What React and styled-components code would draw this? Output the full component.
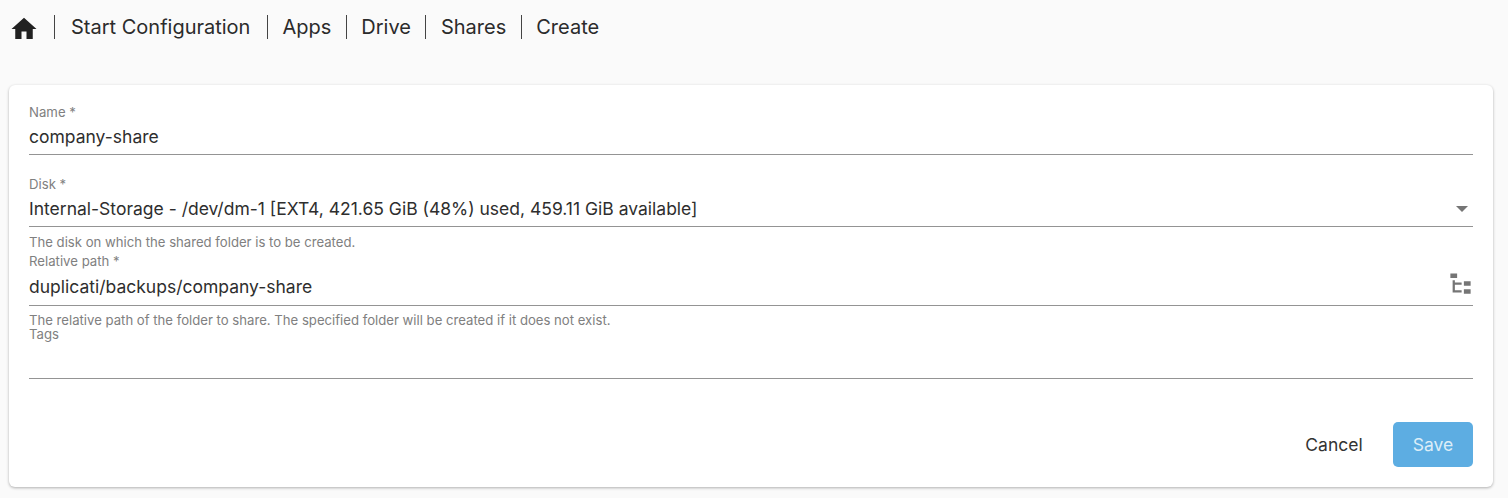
import styled, { createGlobalStyle } from 'styled-components'

const GlobalStyle = createGlobalStyle`
  html, body {
    margin: 0;
    padding: 0;
    background: #fafafa;
    font-family: Inter, "Liberation Sans", sans-serif;
  }
`

const crumbs = ['Start Configuration', 'Apps', 'Drive', 'Shares', 'Create']

function HomeIcon() {
  return (
    <svg width="30" height="30" viewBox="0 0 24 24" fill="#212121">
      <path d="M10 20v-6h4v6h5v-8h3L12 3 2 12h3v8z" />
    </svg>
  )
}

function TreeIcon() {
  return (
    <TreeSvg width="27" height="27" viewBox="0 0 24 24" fill="#757575">
      <path d="M3 3h6v4H3V3m12 7h6v4h-6v-4m0 7h6v4h-6v-4m-2-4H7v5h6v2H5V9h2v2h6v2z" />
    </TreeSvg>
  )
}

function Field({ label, value, hint, icon, rowHeight, offset, hintGap }) {
  return (
    <FieldWrap $offset={offset}>
      <Label>{label}</Label>
      <ValueRow $height={rowHeight}>
        <Value>{value}</Value>
        {icon}
      </ValueRow>
      {hint && <Hint $gap={hintGap}>{hint}</Hint>}
    </FieldWrap>
  )
}

export default function App() {
  return (
    <Page>
      <GlobalStyle />
      <Breadcrumbs>
        <HomeLink><HomeIcon /></HomeLink>
        {crumbs.map((c, i) => <Crumb key={c} $first={i === 0}>{c}</Crumb>)}
      </Breadcrumbs>
      <Card>
        <Field label="Name *" value="company-share" />
        <Spacer />
        <Field
          label="Disk *"
          value="Internal-Storage - /dev/dm-1 [EXT4, 421.65 GiB (48%) used, 459.11 GiB available]"
          hint="The disk on which the shared folder is to be created."
          icon={<Caret />}
        />
        <Field
          label="Relative path *"
          value="duplicati/backups/company-share"
          hint="The relative path of the folder to share. The specified folder will be created if it does not exist."
          icon={<TreeIcon />}
          rowHeight={36}
          offset={3}
          hintGap={7}
        />
        <Field label="Tags" rowHeight={36} offset={-2} />
        <Actions>
          <CancelButton>Cancel</CancelButton>
          <SaveButton>Save</SaveButton>
        </Actions>
      </Card>
    </Page>
  )
}

const Page = styled.div`
  width: 1508px;
  height: 498px;
  box-sizing: border-box;
  padding: 15px 15px 0 9px;
  overflow: hidden;
`

const Breadcrumbs = styled.nav`
  display: flex;
  align-items: center;
  height: 24px;
  color: #212121;
`

const HomeLink = styled.span`
  display: flex;
  align-items: center;
  width: 45px;
  margin-top: 3px;
`

const Crumb = styled.span`
  height: 24px;
  line-height: 24px;
  font-size: 20px;
  color: #2b2b2b;
  padding: 0 ${p => (p.$first ? '16.5px 0 16px' : '14.5px')};
  border-left: 1px solid #444;
`

const Card = styled.section`
  margin-top: 46px;
  width: 1484px;
  height: 402px;
  box-sizing: border-box;
  padding: 19px 20px 20px;
  background: #fff;
  border-radius: 6px;
  box-shadow: 0 1px 3px rgba(0, 0, 0, 0.3);
  display: flex;
  flex-direction: column;
`

const FieldWrap = styled.div`
  display: flex;
  flex-direction: column;
  margin-top: ${p => p.$offset || 0}px;
`

const Label = styled.div`
  font-size: 13.2px;
  line-height: 16px;
  margin-bottom: 1px;
  color: #808080;
`

const ValueRow = styled.div`
  display: flex;
  align-items: center;
  justify-content: space-between;
  height: ${p => p.$height || 34}px;
  box-sizing: border-box;
  border-bottom: 1px solid #949494;
  padding-bottom: 2px;
`

const Value = styled.div`
  font-size: 17.5px;
  color: #2e2e2e;
`

const Hint = styled.div`
  font-size: 13.15px;
  line-height: 15px;
  margin-top: ${p => p.$gap || 8}px;
  color: #808080;
`

const Spacer = styled.div`
  height: 21px;
`

const Caret = styled.span`
  width: 0;
  height: 0;
  margin-right: 5px;
  border-left: 6px solid transparent;
  border-right: 6px solid transparent;
  border-top: 6px solid #757575;
`

const TreeSvg = styled.svg`
  margin: 0 -1px 7px 0;
  flex-shrink: 0;
`

const Actions = styled.div`
  margin-top: auto;
  display: flex;
  justify-content: flex-end;
  align-items: center;
  gap: 10px;
`

const CancelButton = styled.button`
  font: 400 17.5px Inter, sans-serif;
  color: #333;
  background: none;
  border: none;
  width: 98px;
  height: 45px;
  padding: 0;
`

const SaveButton = styled(CancelButton)`
  width: 80px;
  color: #dcedf8;
  background: #5dade2;
  border-radius: 5px;
`
